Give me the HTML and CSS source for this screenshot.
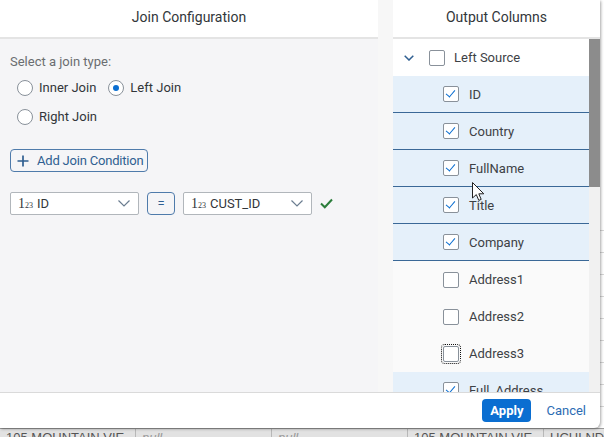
FILE: index.html
```html
<!DOCTYPE html>
<html>
<head>
<meta charset="utf-8">
<link rel="stylesheet" href="styles.css">
</head>
<body>
<div class="bg-table">
  <div class="bg-row"><div class="bg-cell"></div><div class="bg-cell"></div><div class="bg-cell"></div><div class="bg-cell"></div><div class="bg-cell"></div></div>
  <div class="bg-row"><div class="bg-cell"></div><div class="bg-cell"></div><div class="bg-cell"></div><div class="bg-cell"></div><div class="bg-cell"></div></div>
  <div class="bg-row"><div class="bg-cell"></div><div class="bg-cell"></div><div class="bg-cell"></div><div class="bg-cell"></div><div class="bg-cell"></div></div>
  <div class="bg-row"><div class="bg-cell"></div><div class="bg-cell"></div><div class="bg-cell"></div><div class="bg-cell"></div><div class="bg-cell"></div></div>
  <div class="bg-row"><div class="bg-cell"></div><div class="bg-cell"></div><div class="bg-cell"></div><div class="bg-cell"></div><div class="bg-cell"></div></div>
  <div class="bg-row"><div class="bg-cell"></div><div class="bg-cell"></div><div class="bg-cell"></div><div class="bg-cell"></div><div class="bg-cell"></div></div>
  <div class="bg-row"><div class="bg-cell"></div><div class="bg-cell"></div><div class="bg-cell"></div><div class="bg-cell"></div><div class="bg-cell"></div></div>
  <div class="bg-row"><div class="bg-cell"></div><div class="bg-cell"></div><div class="bg-cell"></div><div class="bg-cell"></div><div class="bg-cell"></div></div>
  <div class="bg-row"><div class="bg-cell"></div><div class="bg-cell"></div><div class="bg-cell"></div><div class="bg-cell"></div><div class="bg-cell"></div></div>
  <div class="bg-row last"><div class="bg-cell">105 MOUNTAIN VIE</div><div class="bg-cell"><i>null</i></div><div class="bg-cell"><i>null</i></div><div class="bg-cell">105 MOUNTAIN VIE</div><div class="bg-cell">UCHLNDS</div></div>
</div>

<div class="dialog">
  <div class="dlg-body">
    <section class="left">
      <header class="pane-head">Join Configuration</header>
      <div class="left-content">
        <div class="label">Select a join type:</div>
        <div class="radio-row first">
          <label class="radio"><span class="rb"></span>Inner Join</label>
          <label class="radio"><span class="rb on"></span>Left Join</label>
        </div>
        <div class="radio-row">
          <label class="radio"><span class="rb"></span>Right Join</label>
        </div>
        <button class="btn-add"><svg class="plus" width="12" height="12" viewBox="0 0 12 12"><path d="M6 0.5V11.5M0.5 6H11.5" stroke="#2f5f91" stroke-width="1.7" fill="none"/></svg><span>Add Join Condition</span></button>
        <div class="cond">
          <div class="select"><span class="ty">1<span class="sub">23</span></span><span class="val">ID</span><svg class="chev" width="12" height="7" viewBox="0 0 12 7"><path d="M0.5 0.5L6 6L11.5 0.5" stroke="#6b7d90" stroke-width="1.2" fill="none"/></svg></div>
          <button class="eq">=</button>
          <div class="select"><span class="ty">1<span class="sub">23</span></span><span class="val">CUST_ID</span><svg class="chev" width="12" height="7" viewBox="0 0 12 7"><path d="M0.5 0.5L6 6L11.5 0.5" stroke="#6b7d90" stroke-width="1.2" fill="none"/></svg></div>
          <svg class="ok" width="13" height="11" viewBox="0 0 13 11"><path d="M1 5.5L4.8 9.3L12 1.5" stroke="#2b7d3b" stroke-width="2" fill="none"/></svg>
        </div>
      </div>
    </section>
    <div class="gap"></div>
    <section class="right">
      <header class="pane-head">Output Columns</header>
      <div class="list-wrap">
        <ul class="list">
          <li class="row root"><svg class="tchev" width="10" height="6" viewBox="0 0 10 6"><path d="M0.7 0.7L5 5L9.3 0.7" stroke="#2f5f91" stroke-width="1.5" fill="none"/></svg><span class="cb"></span>Left Source</li>
          <li class="row sel"><span class="cb on"></span>ID</li>
          <li class="row sel"><span class="cb on"></span>Country</li>
          <li class="row sel"><span class="cb on"></span>FullName</li>
          <li class="row sel"><span class="cb on"></span>Title</li>
          <li class="row sel"><span class="cb on"></span>Company</li>
          <li class="row"><span class="cb"></span>Address1</li>
          <li class="row"><span class="cb"></span>Address2</li>
          <li class="row"><span class="cb focus"></span>Address3</li>
          <li class="row sel"><span class="cb on"></span>Full_Address</li>
        </ul>
        <div class="scroll"><div class="thumb"></div></div>
      </div>
    </section>
  </div>
  <footer class="dlg-foot">
    <button class="apply">Apply</button>
    <a class="cancel">Cancel</a>
  </footer>
</div>

<svg class="cursor" width="13" height="20" viewBox="0 0 13 20"><path d="M0.5 0.5V16L4.3 12.6L6.8 18.4L9.2 17.4L6.8 11.8H11.8Z" fill="#fff" stroke="#222" stroke-width="1"/></svg>
</body>
</html>
```

FILE: styles.css
```css
html, body {
  margin: 0;
  padding: 0;
}
body {
  width: 604px;
  height: 437px;
  overflow: hidden;
  background: #fff;
  font-family: Roboto, "Liberation Sans", sans-serif;
  position: relative;
}

/* background table */
.bg-table {
  width: 604px;
  overflow: hidden;
  padding-top: 230px;
}
.bg-row {
  display: flex;
  height: 22px;
  box-sizing: border-box;
  border-top: 1px solid #d6d6d6;
  background: #fff;
}
.bg-cell {
  width: 136px;
  flex: none;
  box-sizing: border-box;
  border-right: 1px solid #cfcfcf;
  padding: 2px 6px 0;
  font: 13px "Liberation Sans", sans-serif;
  color: #555;
  white-space: nowrap;
  overflow: hidden;
}
.bg-row .bg-cell:last-child {
  width: 60px;
  border-right: none;
}
.bg-row.last {
  background: #e2e2e2;
  border-top: 1px solid #9c9c9c;
}
.bg-row.last .bg-cell {
  padding-top: 1px;
  border-right-color: #b8b8b8;
}
.bg-cell i {
  color: #999;
}

/* dialog */
.dialog {
  position: absolute;
  left: 0;
  top: 0;
  width: 600px;
  height: 428px;
  background: #fff;
  border-radius: 0 0 6px 0;
  box-shadow: 1px 1px 3px rgba(0, 0, 0, 0.35);
  display: flex;
  flex-direction: column;
  overflow: hidden;
}
.dlg-body {
  display: flex;
  height: 392px;
  flex: none;
}
.left {
  width: 378px;
  display: flex;
  flex-direction: column;
}
.pane-head {
  height: 39px;
  box-sizing: border-box;
  border-bottom: 2px solid #e4e4e4;
  background: #fff;
  display: flex;
  align-items: center;
  justify-content: center;
  padding-bottom: 3px;
  font-size: 14px;
  color: #32363a;
  flex: none;
}
.left-content {
  flex: 1;
  background: #f5f5f7;
  padding: 15px 10px 0;
}
.label {
  font-size: 13px;
  line-height: 16px;
  color: #6a6d70;
}
.radio-row {
  display: flex;
  align-items: center;
  height: 29px;
  padding-left: 7px;
  gap: 12px;
}
.radio-row.first {
  margin-top: 3px;
}
.radio {
  display: flex;
  align-items: center;
  gap: 6px;
  font-size: 13px;
  color: #32363a;
}
.rb {
  width: 16px;
  height: 16px;
  box-sizing: border-box;
  border: 1px solid #89919a;
  border-radius: 50%;
  background: #fff;
  display: flex;
  align-items: center;
  justify-content: center;
}
.rb.on::after {
  content: "";
  width: 6px;
  height: 6px;
  border-radius: 50%;
  background: #0a6ed1;
}
.btn-add {
  margin-top: 18px;
  width: 138px;
  height: 23px;
  box-sizing: border-box;
  border: 1px solid #4f7bab;
  border-radius: 4px;
  background: transparent;
  display: flex;
  align-items: center;
  gap: 8px;
  padding: 0 0 0 6px;
  font-family: inherit;
  font-size: 13px;
  letter-spacing: -0.2px;
  color: #2f5f91;
  white-space: nowrap;
}
.plus {
  flex: none;
}
.cond {
  margin-top: 20px;
  display: flex;
  align-items: center;
  gap: 8px;
}
.select {
  width: 129px;
  height: 23px;
  box-sizing: border-box;
  border: 1px solid #b1b6bb;
  border-radius: 2px;
  background: #fff;
  display: flex;
  align-items: center;
  padding: 0 8px 0 7px;
  font-size: 13px;
  color: #32363a;
}
.ty {
  font-family: "Liberation Serif", serif;
  font-size: 14px;
  width: 14px;
  margin-right: 5px;
  color: #32363a;
  white-space: nowrap;
}
.ty .sub {
  font-size: 8px;
}
.val {
  flex: 1;
}
.eq {
  width: 28px;
  height: 23px;
  box-sizing: border-box;
  border: 1px solid #4f7bab;
  border-radius: 4px;
  background: transparent;
  color: #2f5f91;
  font-family: inherit;
  font-size: 13px;
  padding: 0;
}
.gap {
  width: 15px;
  background: #f7f7f7;
  flex: none;
}
.right {
  width: 207px;
  display: flex;
  flex-direction: column;
}
.list-wrap {
  flex: 1;
  display: flex;
  min-height: 0;
  overflow: hidden;
}
.list {
  width: 196px;
  margin: 0;
  padding: 0;
  list-style: none;
}
.row {
  height: 37px;
  box-sizing: border-box;
  display: flex;
  align-items: center;
  padding-left: 50px;
  font-size: 13px;
  color: #3d4145;
  background: #fafafa;
}
.row.sel {
  background: #e5f0fa;
  border-bottom: 1px solid #3a6897;
}
.row.root {
  background: #fff;
  padding-left: 11px;
}
.tchev {
  margin-right: 15px;
}
.row.root .cb {
  margin-right: 9px;
}
.cb {
  width: 16px;
  height: 16px;
  box-sizing: border-box;
  border: 1px solid #89919a;
  border-radius: 2px;
  background: #fff;
  margin-right: 10px;
  position: relative;
  flex: none;
}
.cb.on::after {
  content: "";
  position: absolute;
  left: 4px;
  top: 1px;
  width: 4px;
  height: 8px;
  border: solid #0a6ed1;
  border-width: 0 1.5px 1.5px 0;
  transform: rotate(40deg);
}
.cb.focus {
  outline: 1px dotted #111;
  outline-offset: 1px;
}
.scroll {
  width: 11px;
  background: #f1f1f1;
  flex: none;
}
.thumb {
  height: 148px;
  background: #8c8c8c;
}
.dlg-foot {
  height: 36px;
  box-sizing: border-box;
  border-top: 1px solid #dadada;
  display: flex;
  justify-content: flex-end;
  align-items: center;
  gap: 15px;
  padding-right: 14px;
  flex: none;
}
.apply {
  width: 49px;
  height: 23px;
  border: none;
  border-radius: 4px;
  background: #0a6ed1;
  color: #fff;
  font-family: inherit;
  font-weight: bold;
  font-size: 13px;
  padding: 0;
}
.cancel {
  color: #2b6cb3;
  font-size: 13px;
}
.cursor {
  position: absolute;
  left: 472px;
  top: 182px;
}
```
